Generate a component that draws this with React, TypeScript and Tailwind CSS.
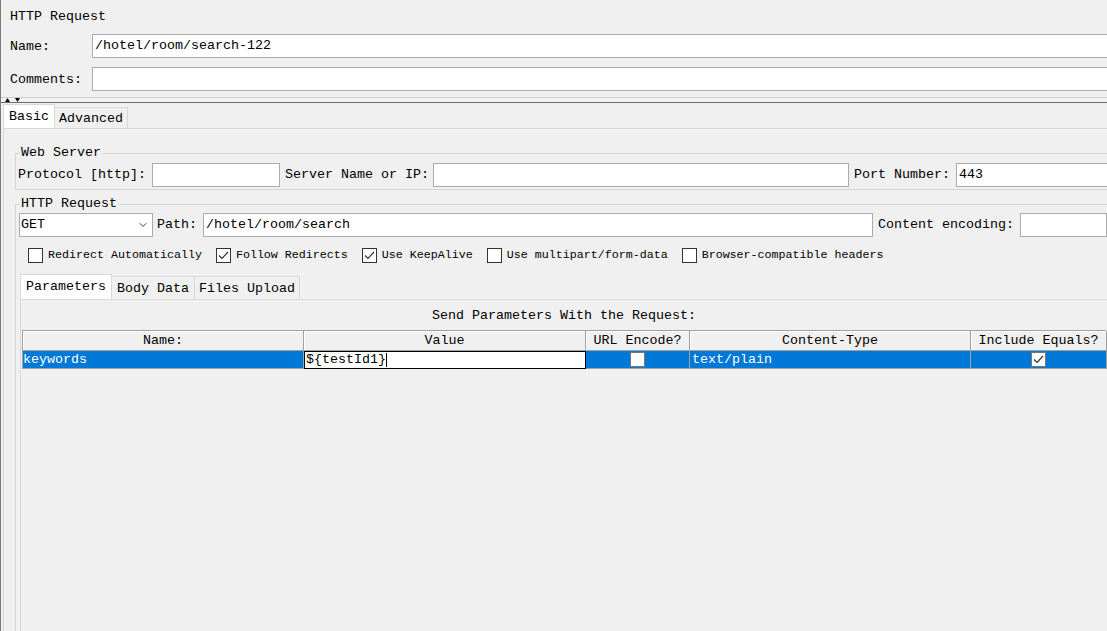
import { ChevronDown } from "lucide-react";

function Field({ className = "", value = "" }: { className?: string; value?: string }) {
    return (
        <div className={`h-[24px] bg-white border border-[#ababab] flex items-center pl-[2px] whitespace-nowrap ${className}`}>
            {value}
        </div>
    );
}

function Tick() {
    return (
        <svg width="11" height="9" viewBox="0 0 11 9" fill="none">
            <polyline points="1,4.5 4,7.5 10,1" stroke="#333" strokeWidth="1.2" />
        </svg>
    );
}

function CheckItem({ label, checked }: { label: string; checked?: boolean }) {
    return (
        <div className="flex items-center gap-[5px]">
            <span className="w-[15px] h-[15px] border border-[#333] bg-white flex items-center justify-center">
                {checked && <Tick />}
            </span>
            <span className="text-[11.67px] whitespace-nowrap">{label}</span>
        </div>
    );
}

export default function App() {
    return (
        <div className="w-[1107px] h-[631px] overflow-hidden bg-[#f0f0f0] border-l border-[#7a7a7a] text-black font-['Liberation_Mono',monospace] text-[13.33px] leading-[16px]">
            <div className="w-[1125px] h-[660px] flex flex-col">
                {/* element header */}
                <div className="pl-[9px]">
                    <div className="h-[33px] flex items-center pt-[1px]">HTTP Request</div>
                    <div className="mt-[1px] flex items-center">
                        <span className="w-[82px] pt-[1px]">Name:</span>
                        <Field className="flex-1" value="/hotel/room/search-122" />
                    </div>
                    <div className="mt-[9px] flex items-center">
                        <span className="w-[82px] pt-[1px]">Comments:</span>
                        <Field className="flex-1" />
                    </div>
                </div>

                {/* split divider */}
                <div className="mt-[6px] h-[6px] border-t border-b border-t-[#cfcfcf] border-b-[#6f6f6f] flex items-center pl-[4px]">
                    <svg width="16" height="4" viewBox="0 0 16 4">
                        <polygon points="0,4 2.5,0 5,4" fill="#000" />
                        <polygon points="10,0 15,0 12.5,4" fill="#000" />
                    </svg>
                </div>

                {/* Basic / Advanced tabs */}
                <div className="mt-[1px] ml-[2px] flex items-end">
                    <div className="h-[24px] px-[5px] bg-white border-t border-l border-r border-[#d9d9d9] flex items-center">Basic</div>
                    <div className="h-[21px] px-[4px] border-t border-r border-[#d9d9d9] flex items-center pt-[2px]">Advanced</div>
                </div>

                <div className="ml-[2px] flex-1 flex flex-col border-l border-t border-[#d9d9d9] pl-[11px]">
                    {/* Web Server */}
                    <fieldset className="mt-[16px] border border-[#d5d5d5]">
                        <legend className="ml-[4px] px-[1px]">Web Server</legend>
                        <div className="pt-[2px] pb-[2px] pl-[2px] flex items-center whitespace-nowrap">
                            <span>Protocol [http]:</span>
                            <Field className="ml-[6px] w-[128px]" />
                            <span className="ml-[5px]">Server Name or IP:</span>
                            <Field className="ml-[4px] w-[416px]" />
                            <span className="ml-[5px]">Port Number:</span>
                            <Field className="ml-[6px] flex-1" value="443" />
                        </div>
                    </fieldset>

                    {/* HTTP Request */}
                    <fieldset className="mt-[6px] flex-1 flex flex-col border border-[#d5d5d5]">
                        <legend className="ml-[4px] px-[1px]">HTTP Request</legend>
                        <div className="pt-[1px] pl-[3px] flex items-center whitespace-nowrap">
                            <div className="w-[134px] h-[24px] bg-white border border-[#ababab] flex items-center justify-between pl-[1px] pr-[3px]">
                                <span>GET</span>
                                <ChevronDown size={12} strokeWidth={1.75} color="#222" />
                            </div>
                            <span className="ml-[4px]">Path:</span>
                            <Field className="ml-[6px] w-[670px]" value="/hotel/room/search" />
                            <span className="ml-[5px]">Content encoding:</span>
                            <Field className="ml-[6px] w-[87px]" />
                        </div>

                        <div className="mt-[10px] pl-[12px] flex items-center gap-[14px]">
                            <CheckItem label="Redirect Automatically" />
                            <CheckItem label="Follow Redirects" checked />
                            <CheckItem label="Use KeepAlive" checked />
                            <CheckItem label="Use multipart/form-data" />
                            <CheckItem label="Browser-compatible headers" />
                        </div>

                        {/* Parameters / Body Data / Files Upload */}
                        <div className="mt-[11px] pl-[4px] flex items-end">
                            <div className="h-[25px] px-[5px] bg-white border-t border-l border-r border-[#d9d9d9] flex items-center">Parameters</div>
                            <div className="h-[23px] px-[5px] border-t border-r border-[#d9d9d9] flex items-center pt-[1px]">Body Data</div>
                            <div className="h-[23px] px-[4px] border-t border-r border-[#d9d9d9] flex items-center pt-[1px]">Files Upload</div>
                        </div>

                        <div className="ml-[4px] flex-1 border-l border-t border-[#d9d9d9] pl-[1px]">
                            <div className="w-[1084px]">
                                <div className="mt-[8px] text-center">Send Parameters With the Request:</div>
                                <div className="mt-[6px] grid grid-cols-[281px_282px_104px_281px_136px] border-l border-t border-[#a0a0a0]">
                                    {["Name:", "Value", "URL Encode?", "Content-Type", "Include Equals?"].map((h) => (
                                        <div key={h} className="h-[20px] flex items-center justify-center bg-[#f0f0f0] border-r border-b border-[#a0a0a0] shadow-[inset_1px_1px_0_#ffffff]">
                                            {h}
                                        </div>
                                    ))}
                                    <div className="h-[18px] bg-[#0078d7] text-white flex items-center border-r border-b border-[#a0a0a0]">keywords</div>
                                    <div className="h-[18px] bg-white border border-black flex items-center pl-[1px]">
                                        <span>{"${testId1}"}</span>
                                        <span className="w-px h-[14px] bg-black" />
                                    </div>
                                    <div className="h-[18px] bg-[#0078d7] flex items-center justify-center border-r border-b border-[#a0a0a0]">
                                        <span className="w-[15px] h-[15px] bg-white border border-[#777]" />
                                    </div>
                                    <div className="h-[18px] bg-[#0078d7] text-white flex items-center pl-[2px] border-r border-b border-[#a0a0a0]">text/plain</div>
                                    <div className="h-[18px] bg-[#0078d7] flex items-center justify-center border-r border-b border-[#a0a0a0]">
                                        <span className="w-[15px] h-[15px] bg-white border border-[#777] flex items-center justify-center">
                                            <Tick />
                                        </span>
                                    </div>
                                </div>
                            </div>
                        </div>
                    </fieldset>
                </div>
            </div>
        </div>
    );
}
